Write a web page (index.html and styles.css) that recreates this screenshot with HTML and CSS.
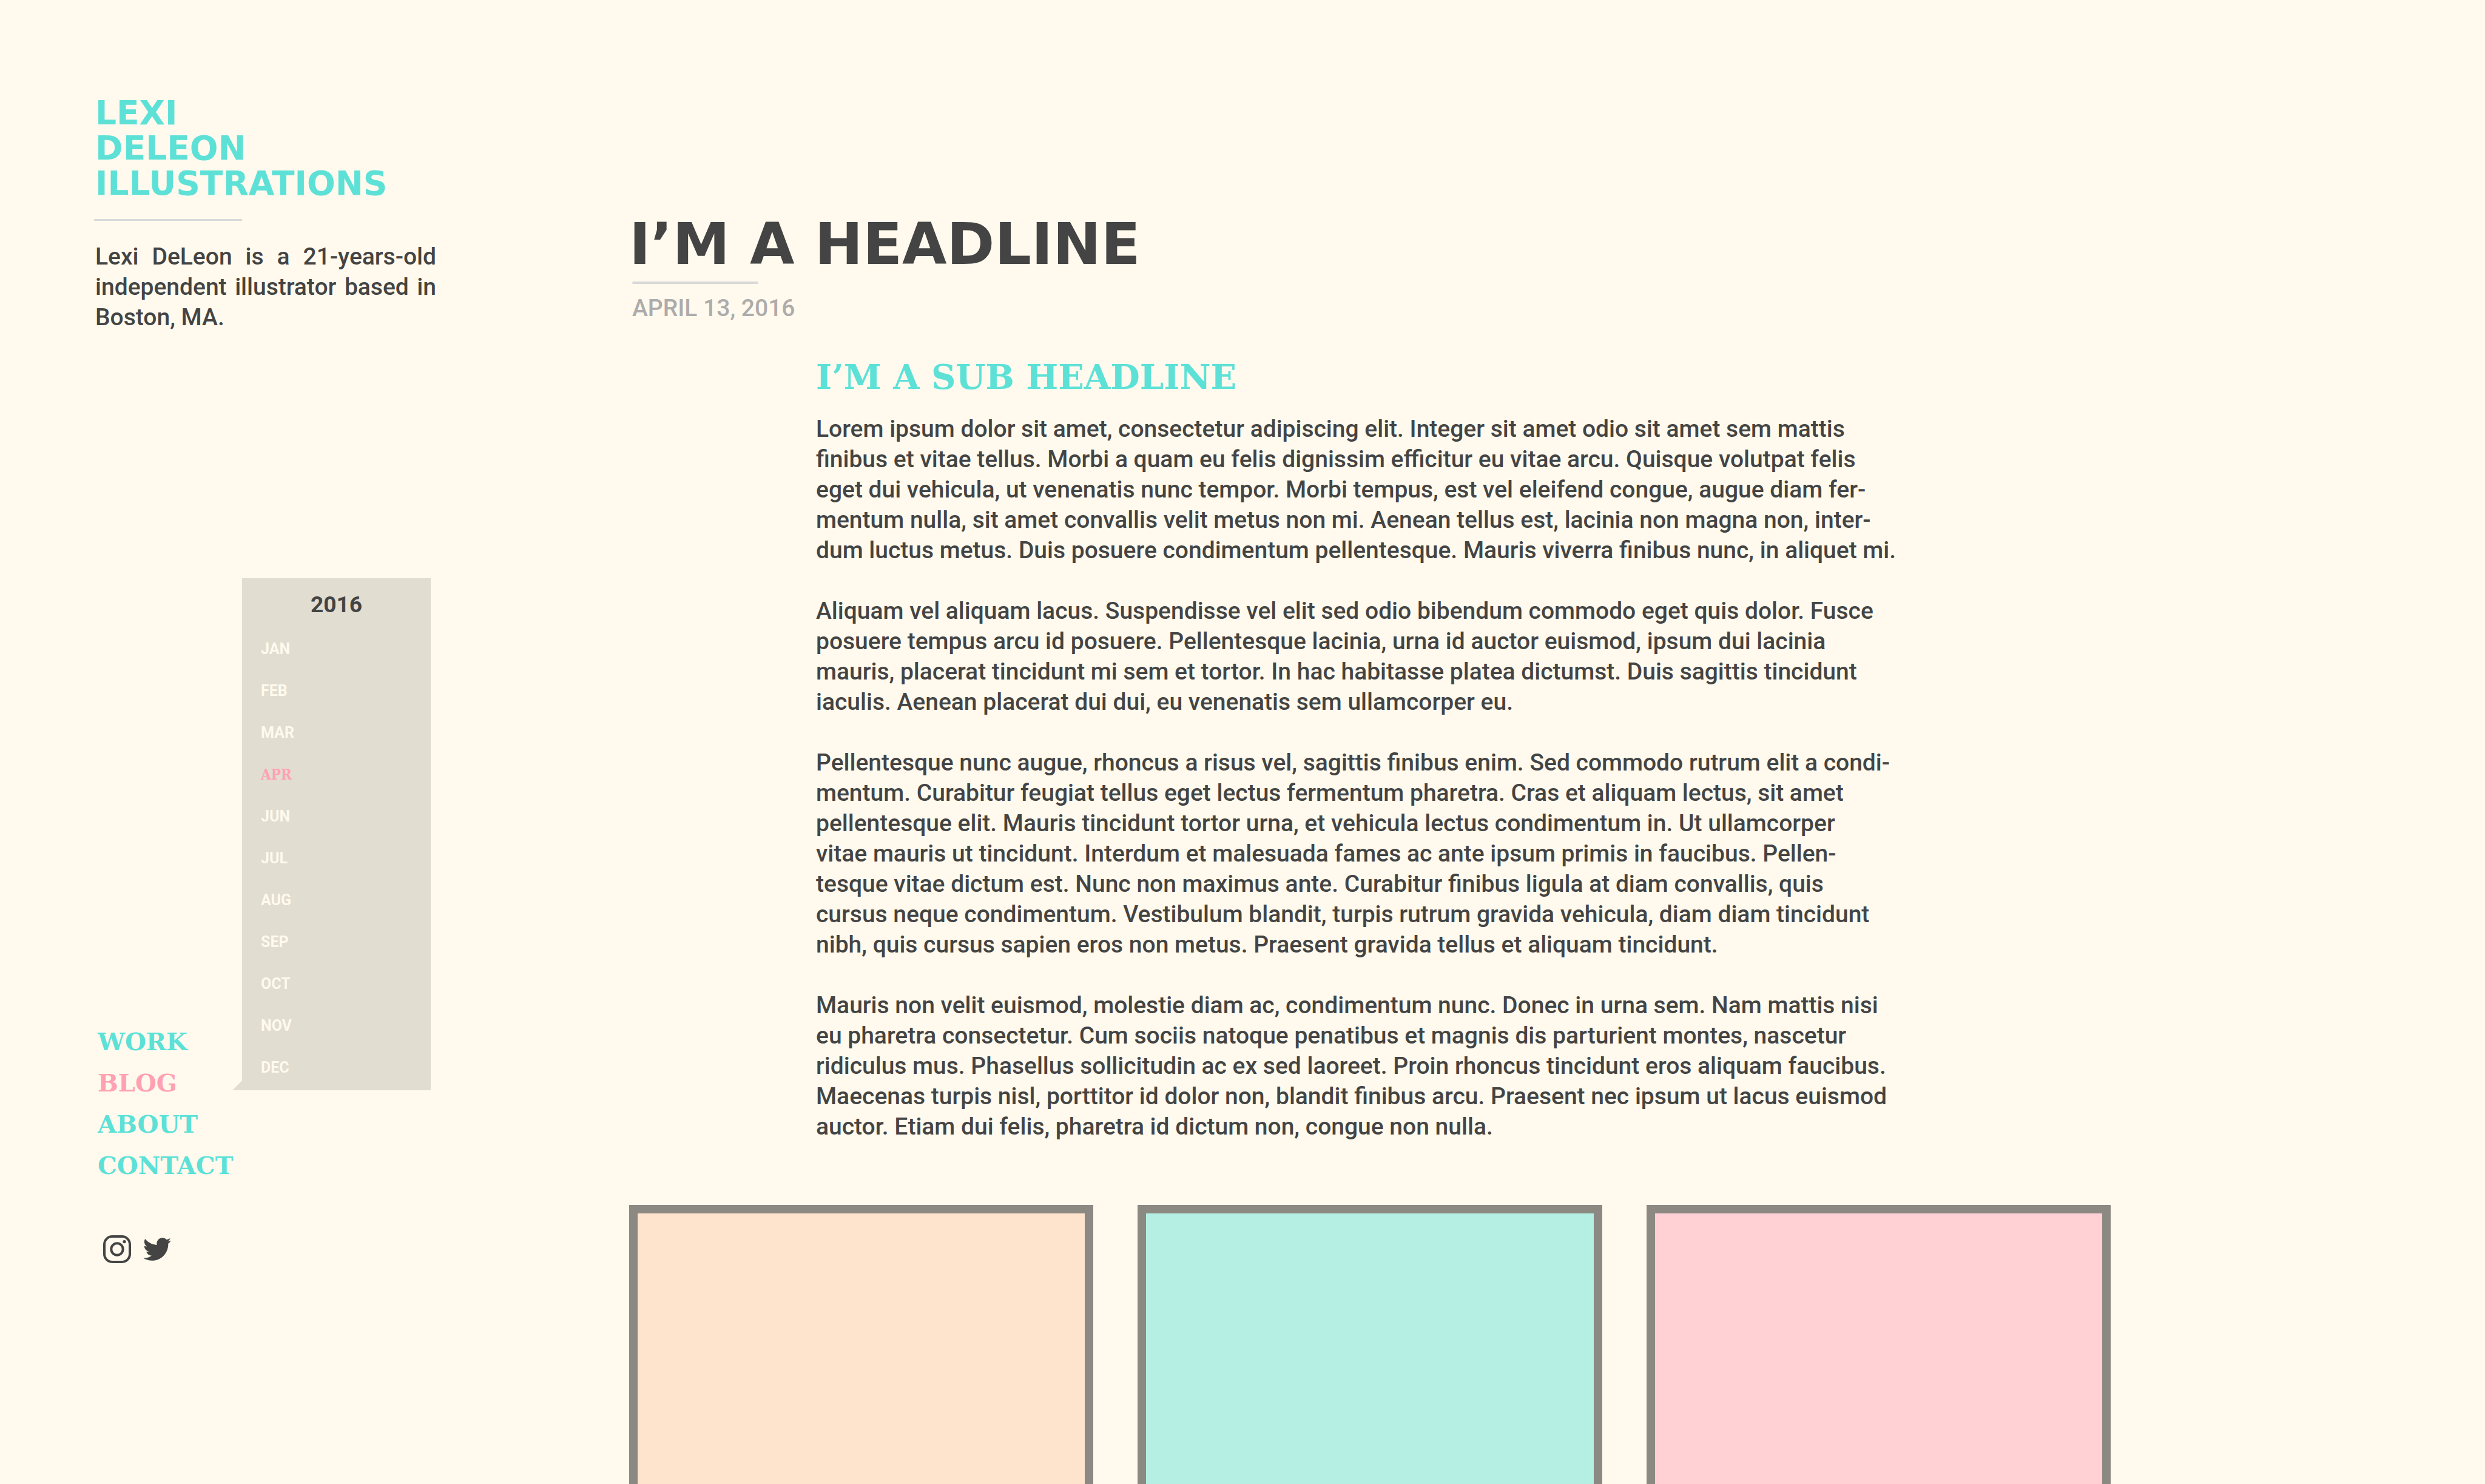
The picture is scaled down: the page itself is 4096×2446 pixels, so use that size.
FILE: index.html
```html
<!DOCTYPE html>
<html lang="en">
<head>
<meta charset="utf-8">
<title>Lexi DeLeon Illustrations</title>
<link rel="stylesheet" href="styles.css">
</head>
<body>
<div class="page">
  <aside class="sidebar">
    <p class="brand">LEXI<br>DELEON<br>ILLUSTRATIONS</p>
    <hr class="rule rule-brand">
    <p class="bio">Lexi DeLeon is a 21-years-old independent illustrator based in Boston, MA.</p>

    <div class="explore">
      <nav class="menu" aria-label="Main">
        <a href="#work">WORK</a>
        <a href="#blog" class="current" aria-current="page">BLOG</a>
        <a href="#about">ABOUT</a>
        <a href="#contact">CONTACT</a>
      </nav>
      <nav class="archive" aria-label="Archive">
        <h2 class="year">2016</h2>
        <ul class="months">
          <li><a href="#jan">JAN</a></li>
          <li><a href="#feb">FEB</a></li>
          <li><a href="#mar">MAR</a></li>
          <li><a href="#apr" class="current">APR</a></li>
          <li><a href="#jun">JUN</a></li>
          <li><a href="#jul">JUL</a></li>
          <li><a href="#aug">AUG</a></li>
          <li><a href="#sep">SEP</a></li>
          <li><a href="#oct">OCT</a></li>
          <li><a href="#nov">NOV</a></li>
          <li><a href="#dec">DEC</a></li>
        </ul>
      </nav>
    </div>

    <div class="social">
      <a href="#instagram" aria-label="Instagram">
        <svg width="46" height="46" viewBox="0 0 46 46" fill="none" stroke="currentColor" stroke-width="4">
          <rect x="2" y="2" width="42" height="42" rx="13"/>
          <circle cx="23" cy="23" r="9.7"/>
          <circle cx="35" cy="10.6" r="2.7" fill="currentColor" stroke="none"/>
        </svg>
      </a>
      <a href="#twitter" aria-label="Twitter">
        <svg width="46" height="38" viewBox="0 2.2 24 19.6" fill="currentColor">
          <path d="M23.954 4.569c-.885.389-1.83.654-2.825.775 1.014-.611 1.794-1.574 2.163-2.723-.951.555-2.005.959-3.127 1.184-.896-.959-2.173-1.559-3.591-1.559-2.717 0-4.92 2.203-4.92 4.917 0 .39.045.765.127 1.124C7.691 8.094 4.066 6.13 1.64 3.161c-.427.722-.666 1.561-.666 2.475 0 1.71.87 3.213 2.188 4.096-.807-.026-1.566-.248-2.228-.616v.061c0 2.385 1.693 4.374 3.946 4.827-.413.111-.849.171-1.296.171-.314 0-.615-.03-.916-.086.631 1.953 2.445 3.377 4.604 3.417-1.68 1.319-3.809 2.105-6.102 2.105-.39 0-.779-.023-1.17-.067 2.189 1.394 4.768 2.209 7.557 2.209 9.054 0 13.999-7.496 13.999-13.986 0-.209 0-.42-.015-.63.961-.689 1.8-1.56 2.46-2.548l-.047-.02z"/>
        </svg>
      </a>
    </div>
  </aside>

  <main class="post">
    <header>
      <h1 class="headline">I’M A HEADLINE</h1>
      <hr class="rule rule-post">
      <p class="date">APRIL 13, 2016</p>
    </header>
    <article class="story">
      <h2 class="subhead">I’M A SUB HEADLINE</h2>
      <p>Lorem ipsum dolor sit amet, consectetur adipiscing elit. Integer sit amet odio sit amet sem mattis<br>
      finibus et vitae tellus. Morbi a quam eu felis dignissim efficitur eu vitae arcu. Quisque volutpat felis<br>
      eget dui vehicula, ut venenatis nunc tempor. Morbi tempus, est vel eleifend congue, augue diam fer-<br>
      mentum nulla, sit amet convallis velit metus non mi. Aenean tellus est, lacinia non magna non, inter-<br>
      dum luctus metus. Duis posuere condimentum pellentesque. Mauris viverra finibus nunc, in aliquet mi.</p>
      <p>Aliquam vel aliquam lacus. Suspendisse vel elit sed odio bibendum commodo eget quis dolor. Fusce<br>
      posuere tempus arcu id posuere. Pellentesque lacinia, urna id auctor euismod, ipsum dui lacinia<br>
      mauris, placerat tincidunt mi sem et tortor. In hac habitasse platea dictumst. Duis sagittis tincidunt<br>
      iaculis. Aenean placerat dui dui, eu venenatis sem ullamcorper eu.</p>
      <p>Pellentesque nunc augue, rhoncus a risus vel, sagittis finibus enim. Sed commodo rutrum elit a condi-<br>
      mentum. Curabitur feugiat tellus eget lectus fermentum pharetra. Cras et aliquam lectus, sit amet<br>
      pellentesque elit. Mauris tincidunt tortor urna, et vehicula lectus condimentum in. Ut ullamcorper<br>
      vitae mauris ut tincidunt. Interdum et malesuada fames ac ante ipsum primis in faucibus. Pellen-<br>
      tesque vitae dictum est. Nunc non maximus ante. Curabitur finibus ligula at diam convallis, quis<br>
      cursus neque condimentum. Vestibulum blandit, turpis rutrum gravida vehicula, diam diam tincidunt<br>
      nibh, quis cursus sapien eros non metus. Praesent gravida tellus et aliquam tincidunt.</p>
      <p>Mauris non velit euismod, molestie diam ac, condimentum nunc. Donec in urna sem. Nam mattis nisi<br>
      eu pharetra consectetur. Cum sociis natoque penatibus et magnis dis parturient montes, nascetur<br>
      ridiculus mus. Phasellus sollicitudin ac ex sed laoreet. Proin rhoncus tincidunt eros aliquam faucibus.<br>
      Maecenas turpis nisl, porttitor id dolor non, blandit finibus arcu. Praesent nec ipsum ut lacus euismod<br>
      auctor. Etiam dui felis, pharetra id dictum non, congue non nulla.</p>
    </article>
    <div class="gallery">
      <div class="frame peach"></div>
      <div class="frame mint"></div>
      <div class="frame rose"></div>
    </div>
  </main>
</div>
</body>
</html>
```
FILE: styles.css
```css
:root {
  --cream: #fffaed;
  --teal: #5de1d7;
  --ink: #444444;
  --pink: #ffa1b3;
  --line: #d9d8da;
  --stone: #e1ddd1;
}

* { box-sizing: border-box; }

body {
  margin: 0;
  background: var(--cream);
  color: var(--ink);
  font: 500 39px/50px Roboto, "Liberation Sans", sans-serif;
}

h1, h2, p, ul { margin: 0; padding: 0; }
ul { list-style: none; }
a { color: inherit; text-decoration: none; }
svg { display: block; }

.page {
  display: grid;
  grid-template-columns: 564px minmax(0, 1fr);
  column-gap: 318px;
  min-height: 100vh;
  padding: 0 617px 0 155px;
}

.rule {
  margin: 0;
  border: 0;
  background: var(--line);
}

/* Sidebar */
.sidebar { padding-top: 157px; }

.brand {
  padding-left: 2px;
  color: var(--teal);
  font: 700 55px/58px "DejaVu Sans", sans-serif;
}

.rule-brand {
  width: 244px;
  height: 3px;
  margin: 30px 0 34px;
}

.bio {
  padding-left: 2px;
  text-align: justify;
}

.explore {
  display: flex;
  align-items: flex-start;
  margin-top: 405px;
}

.menu {
  display: flex;
  flex-direction: column;
  flex: 0 0 244px;
  margin-top: 730px;
  padding-left: 6px;
  color: var(--teal);
  font: 700 40px/68px "DejaVu Serif", serif;
}

.current { color: var(--pink); }

.archive {
  position: relative;
  flex: 0 0 311px;
  padding: 22px 0 3px 31px;
  background: var(--stone);
}

/* Pointer towards the current menu entry */
.archive::before {
  content: "";
  position: absolute;
  right: 100%;
  bottom: 0;
  width: 16px;
  height: 16px;
  background: var(--stone);
  clip-path: polygon(100% 0, 100% 100%, 0 100%);
}

.year {
  padding-right: 31px;
  text-align: center;
  font: 700 37px/44px Roboto, sans-serif;
}

.months {
  margin-top: 16px;
  color: var(--cream);
  font: 700 25px/69px Roboto, sans-serif;
}

.months li { height: 69px; }
.months .current { font: 700 24px/68px "DejaVu Serif Condensed", "DejaVu Serif", serif; }

.social {
  display: flex;
  align-items: center;
  gap: 20px;
  margin-top: 81px;
  padding-left: 15px;
}

/* Post */
.post {
  display: flex;
  flex-direction: column;
  padding-top: 350px;
}

.headline { font: 700 95px/104px "DejaVu Sans", sans-serif; }

.rule-post {
  width: 208px;
  height: 4px;
  margin: 10px 0 15px 5px;
  border-radius: 2px;
}

.date {
  padding-left: 5px;
  color: #adabab;
}

.story {
  display: flex;
  flex-direction: column;
  gap: 50px;
  padding: 55px 0 104px 308px;
  white-space: nowrap;
}

.subhead {
  margin-bottom: -22px;
  color: var(--teal);
  font: 700 56px/66px "DejaVu Serif", serif;
}

.gallery {
  display: grid;
  flex: 1;
  grid-template-columns: repeat(3, minmax(0, 1fr));
  column-gap: 73px;
  min-height: 400px;
}

.frame {
  border: 14px solid #8c8882;
  border-bottom: 0;
}

.peach { background: #ffe4cd; }
.mint { background: #b5eee2; }
.rose { background: #ffd0d4; }
```
